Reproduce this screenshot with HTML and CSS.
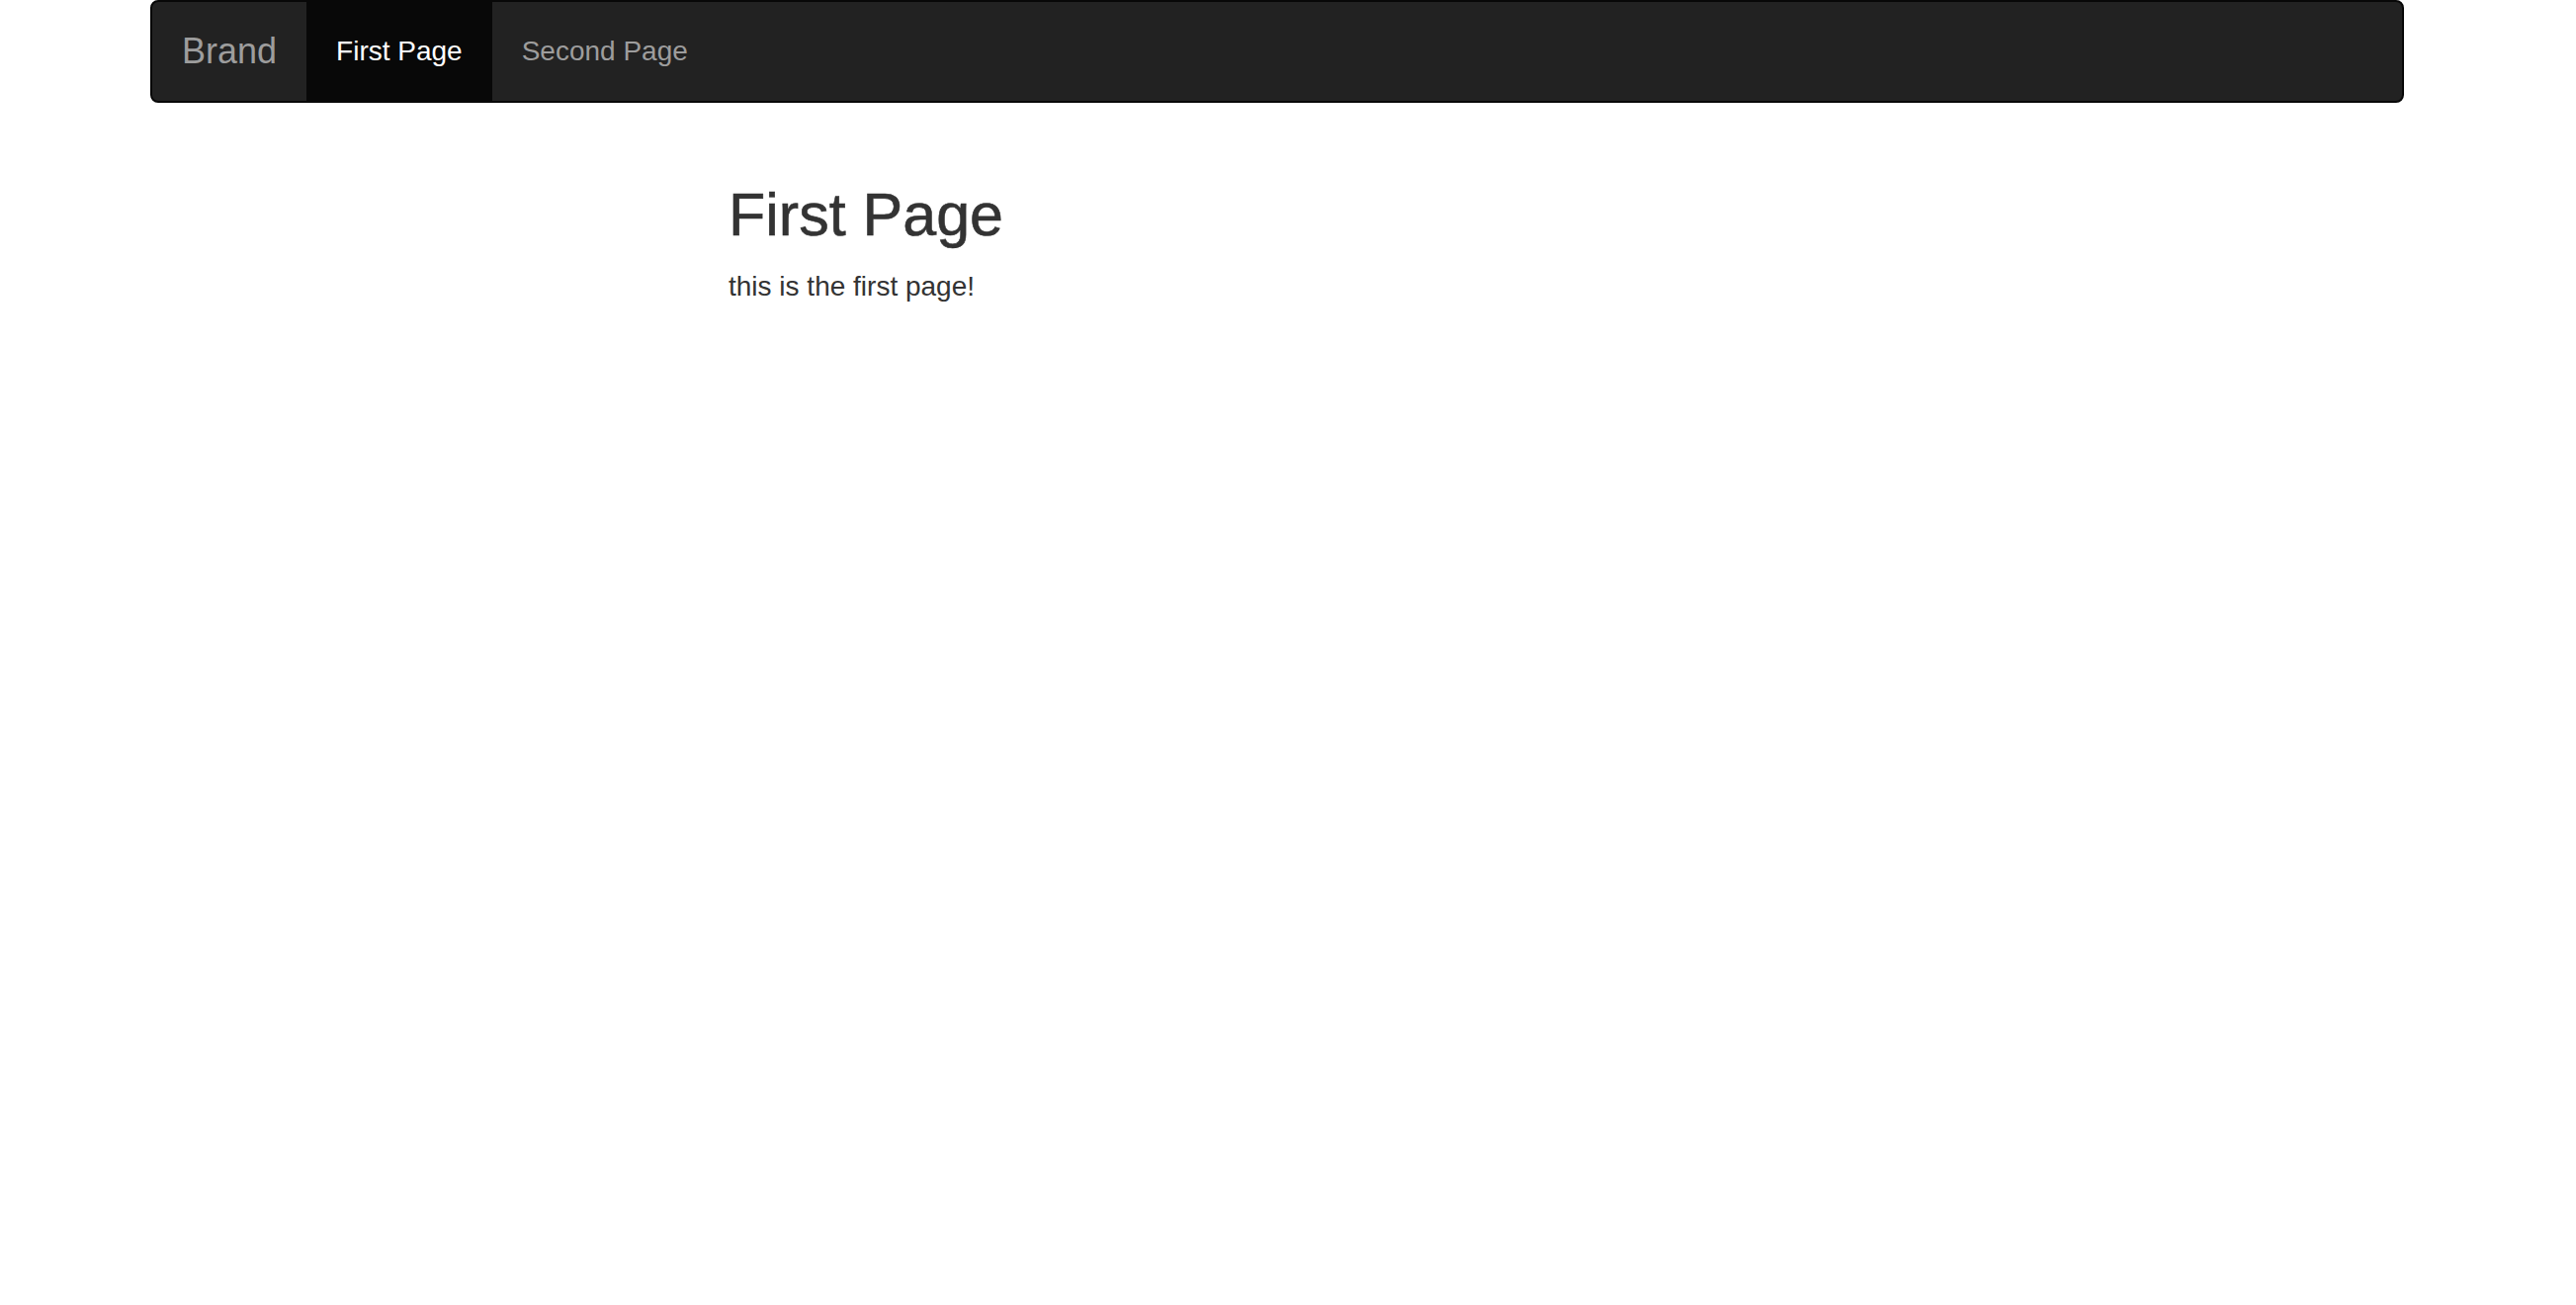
FILE: index.html
```html
<!DOCTYPE html>
<html>
<head>
<meta charset="utf-8">
<title>First Page</title>
<link rel="stylesheet" href="styles.css">
</head>
<body>
<div class="container">
  <nav class="navbar">
    <a class="brand" href="#">Brand</a>
    <ul class="nav">
      <li class="active"><a href="#">First Page</a></li>
      <li><a href="#">Second Page</a></li>
    </ul>
  </nav>
  <main class="content">
    <h2 class="title">First Page</h2>
    <p class="text">this is the first page!</p>
  </main>
</div>
</body>
</html>
```
FILE: styles.css
```css
html, body {
  margin: 0;
  padding: 0;
  background: #fff;
}
body {
  font-family: "Liberation Sans", Arial, sans-serif;
  font-size: 28px;
  line-height: 40px;
  color: #333;
}
.container {
  width: 2280px;
  margin-left: 152px;
}
.navbar {
  display: flex;
  height: 100px;
  background: #222;
  border: 2px solid #080808;
  border-radius: 8px;
  margin-bottom: 40px;
}
.brand {
  display: block;
  padding: 30px 30px;
  font-size: 36px;
  line-height: 40px;
  color: #9d9d9d;
  text-decoration: none;
}
.nav {
  display: flex;
  list-style: none;
  margin: 0;
  padding: 0;
}
.nav a {
  display: block;
  padding: 30px 30px;
  line-height: 40px;
  font-size: 28px;
  color: #9d9d9d;
  text-decoration: none;
}
.nav .active a {
  background: #080808;
  color: #fff;
}
.content {
  display: flow-root;
  padding-left: 585px;
}
.title {
  margin: 40px 0 20px;
  font-size: 61px;
  line-height: 66px;
  font-weight: 500;
  color: #333;
  -webkit-text-stroke: 0.6px #333;
}
.text {
  margin: 0 0 20px;
}
```
